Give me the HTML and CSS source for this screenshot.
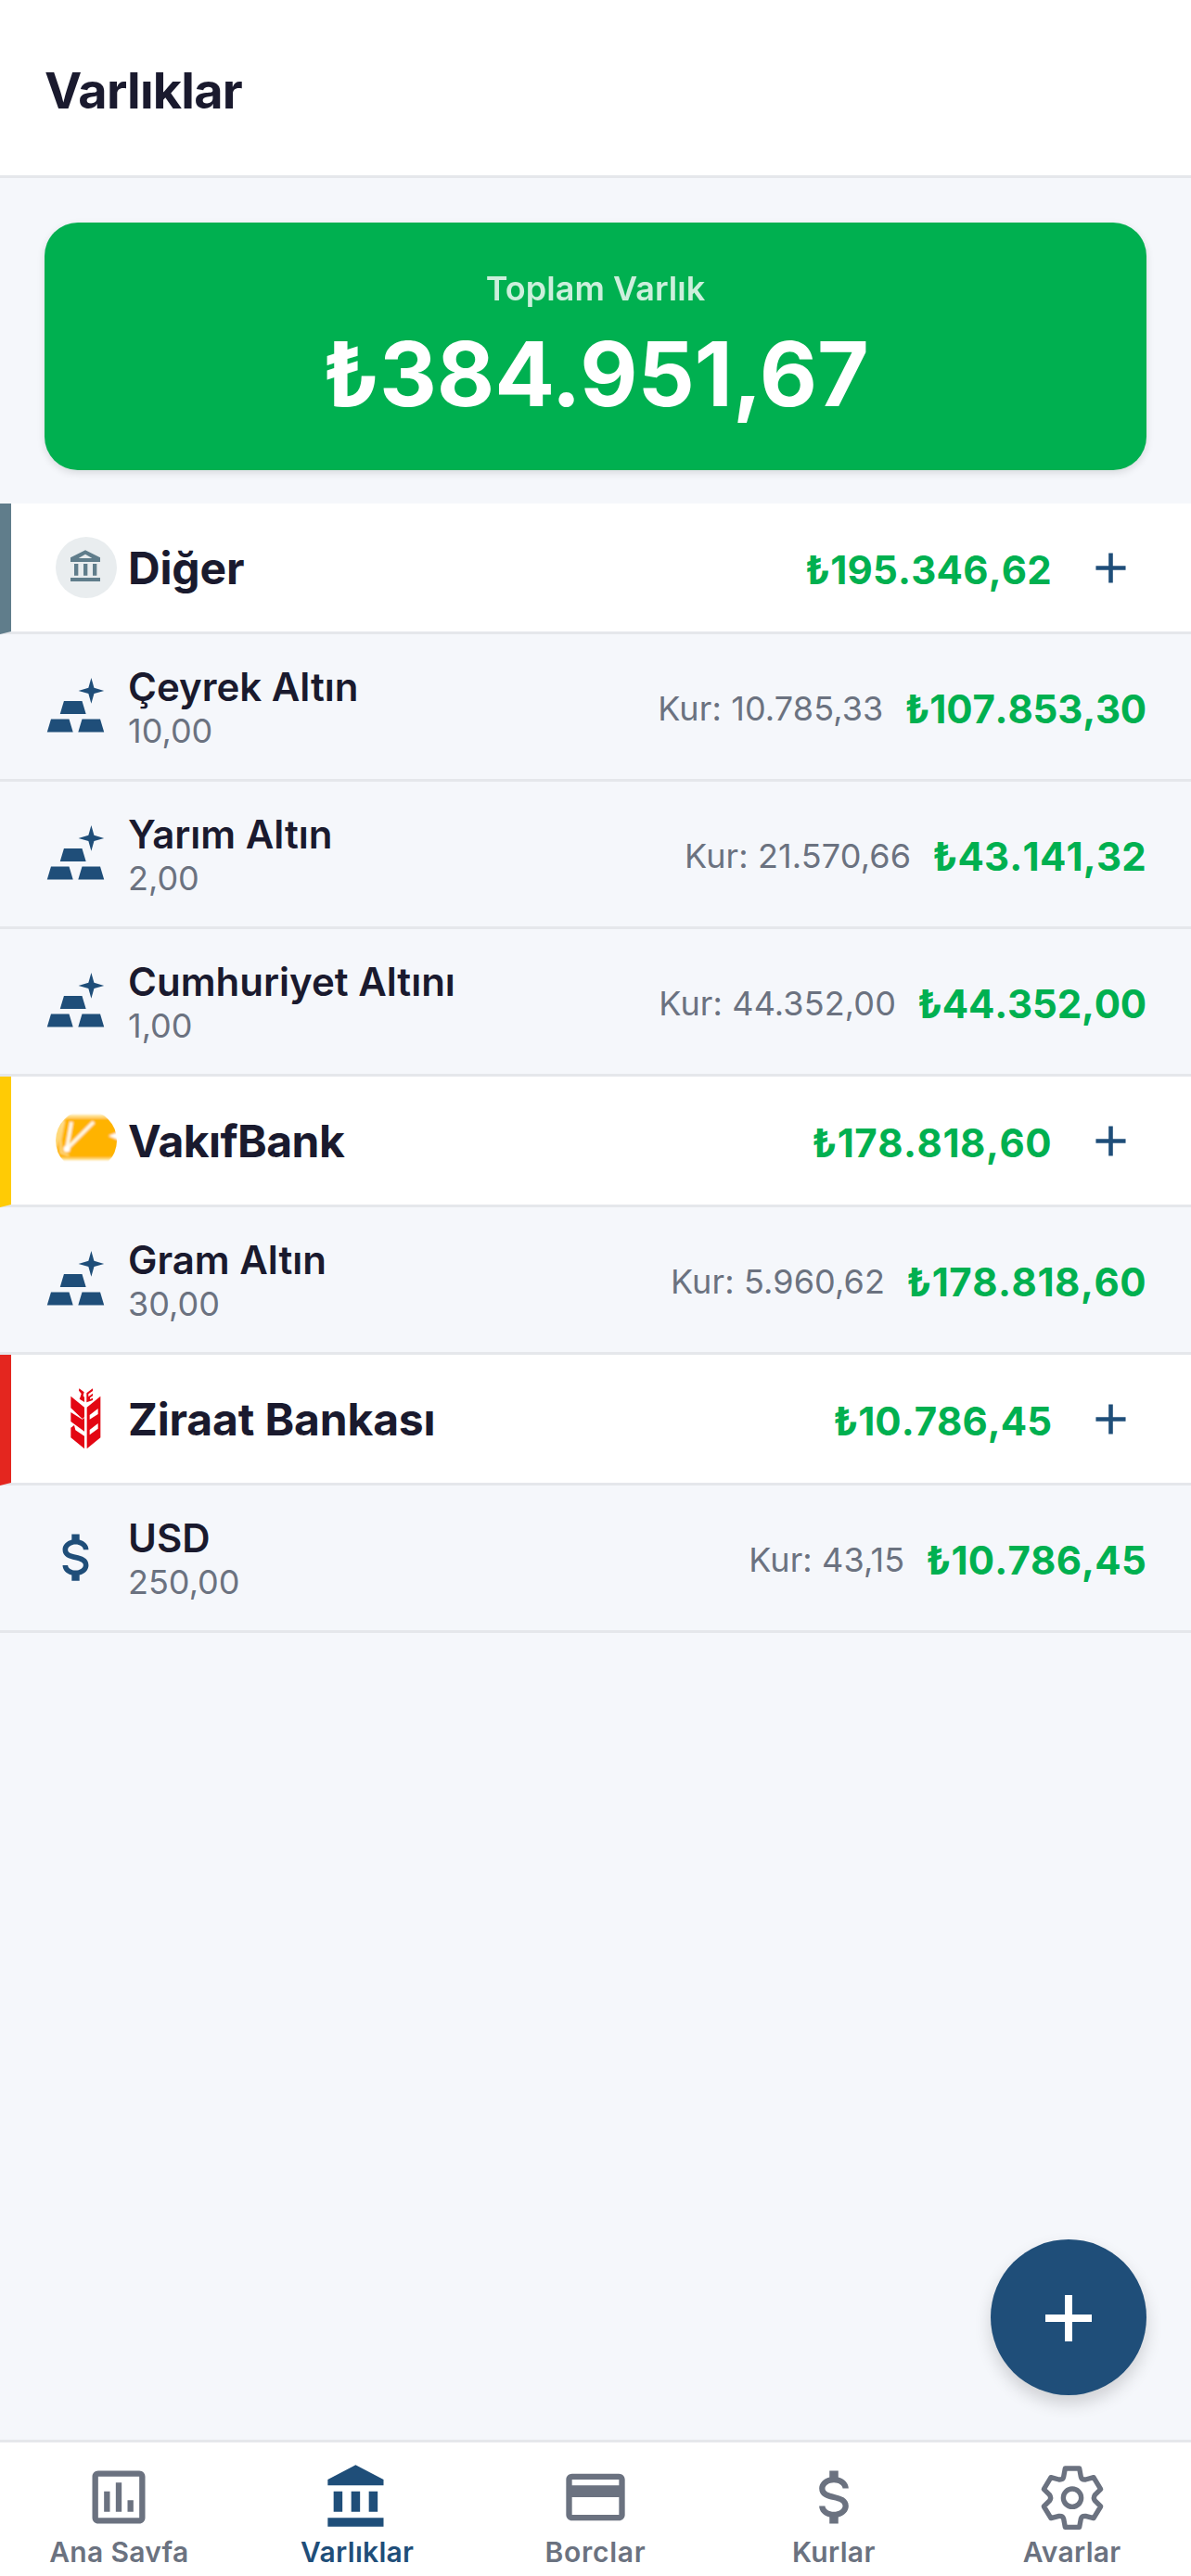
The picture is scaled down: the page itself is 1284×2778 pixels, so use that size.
FILE: index.html
```html
<!DOCTYPE html>
<html lang="tr">
<head>
<meta charset="utf-8">
<title>Varlıklar</title>
<link rel="stylesheet" href="styles.css">
</head>
<body>
<svg class="defs" width="0" height="0" aria-hidden="true">
  <symbol id="gold" viewBox="0 0 24 24"><path d="M1 22L2.5 17H9.5L11 22H1M13 22L14.500 17H21.500L23 22H13M6 15L7.500 10H14.500L16 15H6M23 6.050L19.140 7.140L18.050 11L16.960 7.140L13.100 6.050L16.960 4.960L18.050 1.100L19.140 4.960L23 6.050Z"/></symbol>
  <symbol id="dollar" viewBox="0 0 24 24"><path d="M7 15H9C9 16.080 10.370 17 12 17C13.630 17 15 16.080 15 15C15 13.900 13.960 13.500 11.760 12.970C9.640 12.440 7 11.780 7 9C7 7.210 8.470 5.690 10.500 5.180V3H13.500V5.180C15.530 5.690 17 7.210 17 9H15C15 7.920 13.630 7 12 7C10.370 7 9 7.920 9 9C9 10.100 10.040 10.500 12.240 11.030C14.360 11.560 17 12.220 17 15C17 16.790 15.530 18.310 13.500 18.820V21H10.500V18.820C8.470 18.310 7 16.790 7 15Z"/></symbol>
  <symbol id="plus" viewBox="0 0 24 24"><path d="M19 13H13V19H11V13H5V11H11V5H13V11H19V13Z"/></symbol>
</svg>
<div class="app">
  <header class="header"><h1 class="title">Varlıklar</h1></header>
  <main class="content">
    <section class="total">
      <div class="total-label">Toplam Varlık</div>
      <div class="total-value">₺384.951,67</div>
    </section>

    <div class="bank bank-other">
      <span class="bank-logo logo-other"><svg viewBox="180 147 198 198"><path fill-rule="evenodd" d="M276 190L324 214V228H228V214ZM276 203L254 216H298ZM240 234H253V272H240ZM270 234H283V272H270ZM300 234H313V272H300ZM228 279H324V291H228Z"/></svg></span>
      <span class="bank-name">Diğer</span><span class="bank-sum loose">₺195.346,62</span>
      <svg class="add"><use href="#plus"/></svg>
    </div>
    <div class="asset">
      <svg class="asset-icon"><use href="#gold"/></svg>
      <div class="asset-text"><div class="asset-name">Çeyrek Altın</div><div class="asset-qty">10,00</div></div>
      <span class="rate">Kur: 10.785,33</span><span class="value tight">₺107.853,30</span>
    </div>
    <div class="asset">
      <svg class="asset-icon"><use href="#gold"/></svg>
      <div class="asset-text"><div class="asset-name">Yarım Altın</div><div class="asset-qty">2,00</div></div>
      <span class="rate">Kur: 21.570,66</span><span class="value loose">₺43.141,32</span>
    </div>
    <div class="asset">
      <svg class="asset-icon"><use href="#gold"/></svg>
      <div class="asset-text"><div class="asset-name">Cumhuriyet Altını</div><div class="asset-qty">1,00</div></div>
      <span class="rate">Kur: 44.352,00</span><span class="value tight">₺44.352,00</span>
    </div>

    <div class="bank bank-vakif">
      <span class="bank-logo"><svg viewBox="0 0 66 66">
        <defs><filter id="soft"><feGaussianBlur stdDeviation="0.9"/></filter><clipPath id="round"><circle cx="33" cy="33" r="33"/></clipPath></defs>
        <g clip-path="url(#round)"><g filter="url(#soft)">
          <path fill="#ffd97a" d="M14 5.500H58L66 14V46L58 54H8L-2 46V30L4 12Z"/>
          <path fill="#ffb300" d="M14 9H58L70 16V44Q66 51.500 58 51.500H0V46L8 14Q9 9 14 9Z"/>
          <path fill="none" stroke="#fff" stroke-opacity=".5" stroke-width="2.400" d="M9 12L5 32L6 46L14 49"/>
          <path fill="none" stroke="#fff" stroke-opacity=".9" stroke-width="3.800" stroke-linejoin="round" d="M17 13L12 42L41 13"/>
          <circle cx="12" cy="42" r="3.600" fill="#fff"/>
          <path fill="#fff" d="M57 28L62 26L69 23V33L62 30Z"/>
        </g></g></svg></span>
      <span class="bank-name name-vakif">VakıfBank</span><span class="bank-sum looser">₺178.818,60</span>
      <svg class="add"><use href="#plus"/></svg>
    </div>
    <div class="asset">
      <svg class="asset-icon"><use href="#gold"/></svg>
      <div class="asset-text"><div class="asset-name">Gram Altın</div><div class="asset-qty">30,00</div></div>
      <span class="rate">Kur: 5.960,62</span><span class="value looser">₺178.818,60</span>
    </div>

    <div class="bank bank-ziraat">
      <span class="bank-logo logo-ziraat"><svg viewBox="180 142 198 198">
        <path d="M229 168L273 204V236L266 241L229 206ZM229 220L266 243L273 238V282L229 250ZM229 270L240 262L244 278L273 297V338L229 302Z"/>
        <path fill-rule="evenodd" d="M325 168V302L281 338V204ZM317 208L290 229V243L317 226ZM317 256L290 277V293L317 273Z"/>
        <path d="M256 143L272 155L269 166L273 172V187L257 177L260 170L263 160L255 150ZM300 143V151L286 161V170L300 159V167L291 173V178L300 174V181L280 188V158Z"/>
      </svg></span>
      <span class="bank-name">Ziraat Bankası</span><span class="bank-sum">₺10.786,45</span>
      <svg class="add"><use href="#plus"/></svg>
    </div>
    <div class="asset">
      <svg class="asset-icon"><use href="#dollar"/></svg>
      <div class="asset-text"><div class="asset-name">USD</div><div class="asset-qty">250,00</div></div>
      <span class="rate">Kur: 43,15</span><span class="value loose">₺10.786,45</span>
    </div>
  </main>

  <button class="fab" aria-label="Ekle"><svg viewBox="0 0 50 50"><path d="M21 0H29V21H50V29H29V50H21V29H0V21H21Z"/></svg></button>

  <nav class="tabs">
    <a class="tab"><svg viewBox="0 0 24 24"><path d="M9 17H7V10H9V17M13 17H11V7H13V17M17 17H15V13H17V17M19 19H5V5H19V19.100M19 3H5C3.900 3 3 3.900 3 5V19C3 20.100 3.900 21 5 21H19C20.100 21 21 20.100 21 19V5C21 3.900 20.100 3 19 3Z"/></svg><span class="tab-label">Ana Sayfa</span></a>
    <a class="tab active"><svg viewBox="0 0 24 24"><path d="M11.500 1L2 6V8H21V6M16 10V17H19V10M2 22H21V19H2M10 10V17H13V10M4 10V17H7V10H4Z"/></svg><span class="tab-label">Varlıklar</span></a>
    <a class="tab"><svg viewBox="0 0 24 24"><path d="M20 8H4V6H20M20 18H4V12H20M20 4H4C2.890 4 2 4.890 2 6V18C2 19.100 2.900 20 4 20H20C21.100 20 22 19.100 22 18V6C22 4.890 21.100 4 20 4Z"/></svg><span class="tab-label tab-wide">Borclar</span></a>
    <a class="tab"><svg><use href="#dollar"/></svg><span class="tab-label">Kurlar</span></a>
    <a class="tab"><svg class="gear" viewBox="83 42 228 228"><path d="M174 63H220L225 90Q227 100 240 99L266 92L289 130L270 149Q264 158 270 167L289 186L266 224L240 217Q227 216 225 226L220 253H174L169 226Q167 216 154 217L128 224L105 186L124 167Q130 158 124 149L105 130L128 92L154 99Q167 100 169 90Z"/><circle cx="197" cy="158" r="29"/></svg><span class="tab-label">Ayarlar</span></a>
  </nav>
</div>
</body>
</html>
```
FILE: styles.css
```css
* { box-sizing: border-box; }
body { margin: 0; font-family: Inter, "Noto Sans", sans-serif; color: #1a1a2e; background: #f5f7fb; }
svg { display: block; fill: currentColor; }
.defs { position: absolute; }
.app { position: relative; width: 1284px; height: 2778px; display: flex; flex-direction: column; overflow: hidden; }
.header { height: 192px; flex: none; padding: 0 48px; display: flex; align-items: center; background: #fff; border-bottom: 3px solid #e5e7eb; }
.title { margin: 0; padding-top: 6px; font-size: 54px; font-weight: 700; line-height: 66px; letter-spacing: -0.76px; }
.content { flex: 1; padding-top: 48px; }
.total { height: 267px; margin: 0 48px 36px; padding-top: 49px; border-radius: 36px; background: #00b050; color: #fff; text-align: center; box-shadow: 0 3px 9px rgba(0,0,0,.12); }
.total-label { font-size: 36px; font-weight: 600; line-height: 45px; letter-spacing: 0.05px; opacity: .8; }
.total-value { margin-top: 12px; font-size: 96px; font-weight: 700; line-height: 114px; letter-spacing: -0.2px; }
.bank { height: 141px; display: flex; align-items: center; padding: 0 48px; background: #fff; border-left: 12px solid; border-bottom: 3px solid #e5e7eb; }
.bank-other { border-left-color: #607d8b; }
.bank-vakif { border-left-color: #ffcb05; }
.bank-ziraat { border-left-color: #e4261f; }
.bank-logo { width: 66px; height: 66px; margin-right: 12px; flex: none; border-radius: 50%; }
.bank-logo svg { width: 66px; height: 66px; }
.logo-other { background: #e9edef; color: #607d8b; }
.logo-ziraat { color: #e30613; }
.bank-name { flex: 1; padding-top: 1px; font-size: 48px; font-weight: 700; line-height: 58px; letter-spacing: -0.15px; }
.name-vakif { letter-spacing: -0.55px; }
.bank-sum, .value { padding-top: 4px; font-size: 42px; font-weight: 700; font-kerning: none; color: #00b050; }
.tight { letter-spacing: -0.2px; }
.loose { letter-spacing: 0.2px; }
.looser { letter-spacing: 0.5px; }
.add { width: 55px; height: 55px; margin: 0 11px 0 36px; color: #1f4e79; }
.asset { height: 159px; display: flex; align-items: center; padding: 0 48px; border-bottom: 3px solid #e5e7eb; }
.asset-icon { width: 67px; height: 67px; margin: 0 23px 2px 0; color: #1f4e79; }
.asset-text { flex: 1; }
.asset-name { font-size: 42px; font-weight: 600; line-height: 51px; }
.asset-qty { font-size: 36px; line-height: 44px; color: #6b7280; }
.rate { margin-right: 23px; padding-top: 4px; font-size: 36px; letter-spacing: 0.12px; color: #6b7280; }
.fab { position: absolute; right: 48px; bottom: 195px; width: 168px; height: 168px; padding: 2px 0 0; border: 0; border-radius: 50%; display: grid; place-items: center; background: #1f4e79; color: #fff; box-shadow: 0 9px 18px rgba(0,0,0,.16); }
.fab svg { width: 50px; height: 50px; }
.tabs { height: 147px; flex: none; display: flex; background: #fff; border-top: 3px solid #e5e7eb; }
.tab { flex: 1; display: flex; flex-direction: column; align-items: center; padding-top: 21px; color: #6b7280; }
.tab svg { width: 76px; height: 76px; }
.tab .gear { fill: none; stroke: currentColor; stroke-width: 16; stroke-linejoin: round; }
.tab-label { height: 29px; margin-top: 3px; overflow: hidden; font-size: 30px; font-weight: 600; line-height: 36px; letter-spacing: 0.3px; }
.tab-wide { letter-spacing: 0.75px; }
.active { color: #1f4e79; }
```
